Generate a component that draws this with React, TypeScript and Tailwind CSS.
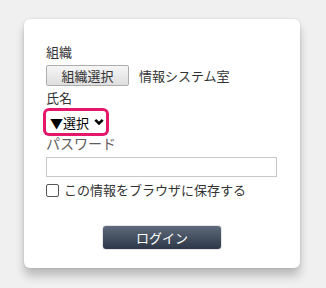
import React, { useState } from 'react';

export default function App() {
  const [remember, setRemember] = useState(false);
  const [password, setPassword] = useState('');

  return (
    <div
      className="min-h-[288px] w-full bg-[#f0f0f0] pt-[19px]"
      style={{ fontFamily: '"Noto Sans CJK JP", "Noto Sans", sans-serif' }}
    >
      <div className="ml-[24px] flex h-[249px] w-[276px] flex-col rounded-[6px] bg-white px-[22px] pt-[24px] shadow-[0_8px_10px_rgba(0,0,0,0.22),0_0_3px_rgba(0,0,0,0.12)]">
        <div className="text-[13px] leading-[18px] text-[#333]">組織</div>

        <div className="mt-[4px] flex items-center">
          <button className="flex h-[21px] w-[83px] items-center justify-center rounded-[2px] border border-[#adadad] bg-gradient-to-b from-[#f6f6f6] to-[#dedede] text-[13px] leading-none text-[#333]">
            組織選択
          </button>
          <span className="ml-[10px] text-[13px] leading-[18px] text-[#333]">情報システム室</span>
        </div>

        <div className="mt-[4px] text-[13px] leading-[16px] text-[#333]">氏名</div>

        <div className="mt-[5px] flex h-[22px] w-[60px] items-center rounded-[2px] bg-white pl-[4px] ring-[3px] ring-[#e5176b] [box-shadow:0_0_0_3px_#e5176b] rounded-[3px]">
          <span className="text-[13px] leading-none text-black">▼選択</span>
          <svg className="ml-[5px]" width="10" height="8" viewBox="0 0 10 8">
            <path d="M1.3 1.8 L5 5.5 L8.7 1.8" fill="none" stroke="#000" strokeWidth="2.6" />
          </svg>
        </div>

        <div className="mt-[2px] text-[14px] leading-[16px] text-[#5e5e5e]">パスワード</div>

        <input
          type="password"
          value={password}
          onChange={(e) => setPassword(e.target.value)}
          className="mt-[6px] h-[20px] w-[231px] border border-[#c8c8c8] bg-white px-1 text-[13px] outline-none"
        />

        <label className="mt-[4px] flex h-[18px] items-center text-[13px] leading-[18px] text-[#333]">
          <input
            type="checkbox"
            checked={remember}
            onChange={(e) => setRemember(e.target.checked)}
            className="h-[13px] w-[13px] appearance-none rounded-[2px] border border-[#555] bg-white"
          />
          <span className="ml-[5px]">この情報をブラウザに保存する</span>
        </label>

        <div className="mt-[27px] flex justify-center">
          <button className="flex h-[23px] w-[118px] items-center justify-center rounded-[3px] bg-gradient-to-b from-[#5f6b7b] to-[#2c3848] text-[13px] leading-none text-white shadow-[0_0_0_1px_#e6e6e6]">
            ログイン
          </button>
        </div>
      </div>
    </div>
  );
}
